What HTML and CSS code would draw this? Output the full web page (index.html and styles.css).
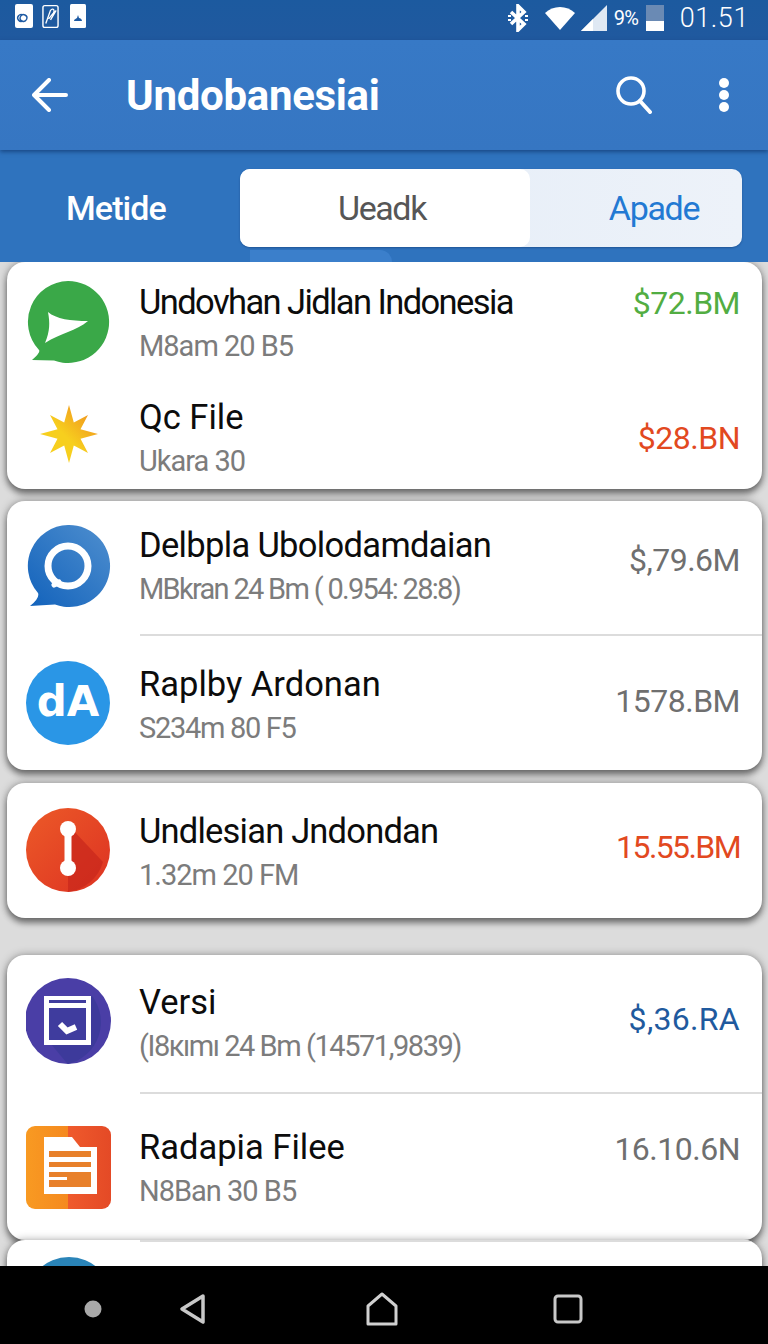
FILE: index.html
```html
<!DOCTYPE html>
<html lang="id">
<head>
<meta charset="utf-8">
<title>Undobanesiai</title>
<link rel="stylesheet" href="styles.css">
</head>
<body>
<div class="phone">
  <header class="status">
    <div class="status-left">
      <svg class="s-app" viewBox="0 0 18 24"><rect width="18" height="24" rx="2" fill="#fff"/><path d="M8 11a3.500 3.500 0 1 0 0 6M7 17a3.200 3.200 0 1 0 3-6 3.200 3.200 0 0 0-3 6" fill="none" stroke="#1e5aa3" stroke-width="1.400"/></svg>
      <svg class="s-app2" viewBox="0 0 18 25"><rect x="1" y="1" width="16" height="23" rx="2" fill="none" stroke="#fff" stroke-width="1.500"/><path d="M4 20 9 6c3-3 5 0 3 3l-5 6M9 16l6-10" fill="none" stroke="#fff" stroke-width="1.400"/></svg>
      <svg class="s-app3" viewBox="0 0 16 24"><rect width="16" height="24" rx="1.500" fill="#fff"/><path d="M4 17c0-2 2-2 3-3l1-3 1 3c1 0 3 1 3 3z" fill="#1e5aa3"/></svg>
    </div>
    <div class="status-right">
      <svg class="s-bt" viewBox="0 0 24 28"><path d="M5 8l13 12-6 6V2l6 6L5 20" fill="none" stroke="#fff" stroke-width="3.600"/><path d="M2 12h3M2 16h3M19 12h3M19 16h3" stroke="#fff" stroke-width="2"/></svg>
      <svg class="s-wifi" viewBox="0 0 30 24"><path d="M0 7C8-1 22-1 30 7L15 24z" fill="#fff"/></svg>
      <svg class="s-sig" viewBox="0 0 26 26"><path d="M0 26 26 0v26z" fill="#dfe8f3"/><path d="M12 26V14L0 26z" fill="#fff"/></svg>
      <span class="s-pct">9%</span>
      <svg class="s-bat" viewBox="0 0 18 26"><rect x="0" y="0" width="18" height="16" fill="#6a8ab4"/><rect x="0" y="16" width="18" height="10" fill="#fff"/></svg>
      <span class="s-time">01.51</span>
    </div>
  </header>

  <div class="appbar">
    <svg class="ab-back" viewBox="0 0 36 34"><path d="M34 17H3M17 2 2 17l15 15" fill="none" stroke="#fff" stroke-width="4" stroke-linecap="round" stroke-linejoin="round"/></svg>
    <h1 class="ab-title">Undobanesiai</h1>
    <svg class="ab-search" viewBox="0 0 36 38"><circle cx="15" cy="15" r="13" fill="none" stroke="#fff" stroke-width="3.600"/><path d="M24 25l10 11" stroke="#fff" stroke-width="4" stroke-linecap="round"/></svg>
    <svg class="ab-more" viewBox="0 0 12 36"><circle cx="6" cy="6" r="5" fill="#fff"/><circle cx="6" cy="18" r="5" fill="#fff"/><circle cx="6" cy="30" r="5" fill="#fff"/></svg>
  </div>

  <nav class="tabs">
    <span class="tab-plain">Metide</span>
    <div class="segment">
      <span class="seg-on">Ueadk</span>
      <span class="seg-off">Apade</span>
    </div>
    <span class="tab-bump"></span>
  </nav>

  <main class="list">
    <section class="card c1">
      <article class="row r1">
        <svg class="icon" viewBox="0 0 86 86"><path d="M42 0a41 41 0 1 1-14 79.500Q16 79 6 79 15 71 13 69A41 41 0 0 1 42 0z" fill="#3aa848"/><path d="M22 31C30 38 45 40 62 40 50 50 35 52 19 62 24 50 24 42 22 31z" fill="#fff"/></svg>
        <div class="text"><div class="title t1">Undovhan Jidlan Indonesia</div><div class="sub">M8am 20 B5</div></div>
        <div class="val green">$72.BM</div>
      </article>
      <article class="row r2">
        <svg class="icon" viewBox="-43 -43 86 86"><defs><linearGradient id="st" x1="0" y1="1" x2="1" y2="0"><stop offset=".45" stop-color="#f7cf1e"/><stop offset="1" stop-color="#ee8420"/></linearGradient></defs><polygon fill="url(#st)" points="0,-29 4.800,-11.500 19,-19 11.500,-4.800 29,0 11.500,4.800 19,19 4.800,11.500 0,29 -4.800,11.500 -19,19 -11.500,4.800 -29,0 -11.500,-4.800 -19,-19 -4.800,-11.500"/></svg>
        <div class="text"><div class="title">Qc File</div><div class="sub">Ukara 30</div></div>
        <div class="val red">$28.BN</div>
      </article>
    </section>

    <section class="card c2">
      <article class="row r3">
        <svg class="icon" viewBox="0 0 86 86"><defs><linearGradient id="bl" x1="1" y1="0" x2="0" y2="1"><stop offset="0" stop-color="#4f8fcf"/><stop offset="1" stop-color="#1262bb"/></linearGradient></defs><path d="M42 1a41 41 0 1 1-13 79.500Q16 81 4 82 14 74 12 69A41 41 0 0 1 42 1z" fill="url(#bl)"/><circle cx="42" cy="42" r="20" fill="none" stroke="#fff" stroke-width="7"/><path d="M33 58l-5 3" stroke="#fff" stroke-width="5" stroke-linecap="round"/></svg>
        <div class="text"><div class="title t3">Delbpla Ubolodamdaian</div><div class="sub s3">MBkran 24 Bm ( 0.954: 28:8)</div></div>
        <div class="val gray">$,79.6M</div>
      </article>
      <div class="divider"></div>
      <article class="row r4">
        <svg class="icon" viewBox="0 0 86 86"><circle cx="42" cy="43" r="42" fill="#2a96e6"/><text class="da" x="42" y="56" text-anchor="middle">dA</text></svg>
        <div class="text"><div class="title">Raplby Ardonan</div><div class="sub s4">S234m 80 F5</div></div>
        <div class="val gray">1578.BM</div>
      </article>
    </section>

    <section class="card c3">
      <article class="row r5">
        <svg class="icon" viewBox="0 0 86 86"><defs><linearGradient id="rd" x1="0" y1="0" x2="1" y2="1"><stop offset="0" stop-color="#ec5a28"/><stop offset="1" stop-color="#dd3222"/></linearGradient></defs><circle cx="42" cy="43" r="42" fill="url(#rd)"/><path d="M46 22 77 55A42 42 0 0 1 42 85L42 60z" fill="#c9281c" opacity=".75"/><path d="M42 22v39" stroke="#fff" stroke-width="7"/><circle cx="42" cy="22" r="8" fill="#fff"/><circle cx="42" cy="61" r="8" fill="#fff"/></svg>
        <div class="text"><div class="title t5">Undlesian Jndondan</div><div class="sub">1.32m 20 FM</div></div>
        <div class="val red v5">15.55.BM</div>
      </article>
    </section>

    <section class="card c4">
      <article class="row r6">
        <svg class="icon" viewBox="0 0 86 86"><circle cx="42" cy="43" r="43" fill="#4a3ea6"/><path d="M66 18A43 43 0 0 1 42 86L40 84 20 60z" fill="#3a3a98" opacity=".8"/><rect x="18" y="18" width="47" height="49" fill="#fff"/><rect x="23" y="22" width="37" height="3" fill="#3f3c9e"/><rect x="23" y="30" width="37" height="32" fill="#3f3c9e"/><path d="M34 46l7 7 9-4" fill="none" stroke="#fff" stroke-width="6"/></svg>
        <div class="text"><div class="title">Versi</div><div class="sub s6">(I8кımı 24 Bm (14571,9839)</div></div>
        <div class="val navy v6">$,36.RA</div>
      </article>
      <div class="divider"></div>
      <article class="row r7">
        <svg class="icon" viewBox="0 0 86 86"><defs><linearGradient id="o1" x1="0" y1="0" x2="1" y2="0"><stop offset="0" stop-color="#f89a22"/><stop offset=".5" stop-color="#f5891f"/><stop offset=".5" stop-color="#ef5a2c"/><stop offset="1" stop-color="#e44a26"/></linearGradient></defs><rect y="1" width="85" height="83" rx="9" fill="url(#o1)"/><path d="M18 12H46L54 22H71V69H18z" fill="#fff"/><path d="M23 26H65V32H23zM23 37H65V42H23zM23 47H65V62H23z" fill="#e8802a"/><path d="M23 52H41V55H23z" fill="#fff"/></svg>
        <div class="text"><div class="title">Radapia Filee</div><div class="sub">N8Ban 30 B5</div></div>
        <div class="val gray v7">16.10.6N</div>
      </article>
    </section>

    <section class="card c5">
      <div class="divider"></div>
      <div class="peek"></div>
    </section>
  </main>

  <footer class="nav">
    <svg class="n-dot" viewBox="0 0 18 18"><circle cx="9" cy="9" r="8.500" fill="#a9a9a9"/></svg>
    <svg class="n-back" viewBox="0 0 28 32"><path d="M25 3 4 16l21 13z" fill="none" stroke="#c8c8c8" stroke-width="3.500" stroke-linejoin="round"/></svg>
    <svg class="n-home" viewBox="0 0 32 34"><path d="M2 14 16 2l14 12v18H2z" fill="none" stroke="#d0d0d0" stroke-width="3" stroke-linejoin="round"/></svg>
    <svg class="n-rec" viewBox="0 0 30 30"><rect x="2" y="2" width="26" height="26" rx="3" fill="none" stroke="#c8c8c8" stroke-width="3"/></svg>
  </footer>
</div>
</body>
</html>
```
FILE: styles.css
```css
* { box-sizing: border-box; margin: 0; padding: 0; }
html, body { width: 768px; height: 1344px; overflow: hidden; background: #dcdcdc; }
body { font-family: Roboto, "Liberation Sans", sans-serif; }
.phone { width: 768px; height: 1344px; display: flex; flex-direction: column; overflow: hidden; }

.status { height: 40px; flex: none; background: linear-gradient(#1c5a9f, #20599f); display: flex; justify-content: space-between; align-items: center; padding: 0 19px 4px 15px; color: #fff; }
.status-left, .status-right { display: flex; align-items: center; }
.status-left { margin-bottom: 4px; }
.s-app { width: 18px; height: 24px; }
.s-app2 { width: 17px; height: 25px; margin-left: 9px; }
.s-app3 { width: 16px; height: 24px; margin-left: 11px; }
.s-bt { width: 24px; height: 28px; }
.s-wifi { width: 30px; height: 24px; margin-left: 15px; }
.s-sig { width: 26px; height: 26px; margin-left: 6px; }
.s-pct { font-size: 20px; width: 27px; margin-left: 7px; letter-spacing: -.5px; white-space: nowrap; }
.s-bat { width: 18px; height: 26px; margin-left: 5px; }
.s-time { font-size: 27px; font-weight: 300; margin-left: 16px; letter-spacing: .6px; }

.appbar { height: 110px; flex: none; background: linear-gradient(#3779c6, #3676c2); display: flex; align-items: center; padding: 0 38px 0 32px; box-shadow: 0 2px 4px rgba(10, 40, 90, .55); position: relative; z-index: 1; }
.ab-back { width: 36px; height: 34px; }
.ab-title { font-size: 42px; font-weight: 700; color: #fff; margin-left: 58px; flex: 1; letter-spacing: -.3px; }
.ab-search { width: 36px; height: 38px; }
.ab-more { width: 12px; height: 36px; margin-left: 66px; }

.tabs { height: 112px; flex: none; background: #2f73be; display: flex; align-items: flex-start; padding: 19px 26px 0 66px; position: relative; }
.tab-plain { font-size: 34px; font-weight: 500; color: #fff; width: 174px; line-height: 78px; letter-spacing: -.9px; }
.segment { width: 502px; height: 78px; border-radius: 10px; background: linear-gradient(90deg, #e3ecf7, #edf2f9); display: flex; overflow: hidden; box-shadow: 0 1px 2px rgba(10, 40, 90, .4); }
.seg-on { width: 290px; background: #fff; border-radius: 0 10px 10px 0; font-size: 34px; color: #565656; text-align: center; line-height: 78px; letter-spacing: -1.400px; padding-right: 6px; }
.seg-off { flex: 1; font-size: 34px; color: #2279d3; text-align: center; line-height: 78px; letter-spacing: -1.300px; padding-left: 36px; }
.tab-bump { position: absolute; left: 250px; top: 100px; width: 142px; height: 12px; background: #3b7fcb; border-radius: 0 14px 0 0; }

.list { flex: 1; min-height: 0; overflow: hidden; padding: 0 6px 0 7px; }
.card { background: #fff; border-radius: 18px; box-shadow: 0 5px 6px rgba(0, 0, 0, .42), 0 0 8px rgba(0, 0, 0, .34); }
.c2 { margin-top: 12px; }
.c3 { margin-top: 13px; }
.c4 { margin-top: 37px; }
.c5 { height: 60px; position: relative; overflow: hidden; }
.peek { position: absolute; left: 19px; top: 17px; width: 86px; height: 86px; border-radius: 50%; background: #2a84b8; }

.row { display: grid; grid-template-columns: 86px 1fr auto; column-gap: 27px; align-items: center; padding-left: 19px; padding-right: 22px; }
.r1 { height: 114px; padding-top: 10px; }
.r2 { height: 113px; padding-top: 13px; }
.r3 { height: 133px; padding-bottom: 2px; }
.r4 { height: 134px; padding-top: 5px; }
.r5 { height: 135px; padding-top: 5px; }
.r6 { height: 137px; }
.r7 { height: 146px; padding-top: 3px; }
.divider { height: 2px; margin-left: 133px; background: #dcdcdc; }

.icon { width: 86px; height: 86px; display: block; }
.r2 .icon { margin-bottom: 10px; }
.r4 .icon { margin-bottom: 5px; }
.r5 .icon { margin-bottom: 6px; }
.r6 .icon { margin-bottom: 5px; }
.r7 .icon { margin-bottom: 1px; }
.da { font: 700 42px "DejaVu Sans", sans-serif; fill: #fff; }

.title { font-size: 34.500px; line-height: 44px; color: #0c0c0c; white-space: nowrap; }
.t1 { letter-spacing: -1.600px; }
.t3 { letter-spacing: -.67px; }
.t5 { letter-spacing: -.8px; }
.sub { font-size: 29px; line-height: 44px; color: #7c7c7c; white-space: nowrap; letter-spacing: -1px; }
.s3 { letter-spacing: -1.700px; }
.s4 { letter-spacing: -1.300px; }
.s6 { letter-spacing: -1.450px; }

.val { font-size: 32px; white-space: nowrap; letter-spacing: -.5px; }
.green { color: #52ad42; align-self: start; margin-top: 12px; }
.r2 .val { margin-bottom: 2px; }
.r3 .val { margin-bottom: 14px; }
.r4 .val { margin-bottom: 10px; }
.red { color: #e2491f; }
.v5 { margin-bottom: 12px; letter-spacing: -1.600px; }
.gray { color: #6f6f6f; }
.navy { color: #1f5a9e; }
.v6 { margin-bottom: 10px; letter-spacing: .3px; }
.v7 { align-self: start; margin-top: 33px; }

.nav { height: 78px; flex: none; background: #000; position: relative; z-index: 2; display: flex; align-items: center; padding: 8px 0 0 84px; }
.n-dot { width: 18px; height: 18px; }
.n-back { width: 28px; height: 32px; margin-left: 76px; }
.n-home { width: 32px; height: 34px; margin-left: 160px; }
.n-rec { width: 30px; height: 30px; margin-left: 155px; }
```
